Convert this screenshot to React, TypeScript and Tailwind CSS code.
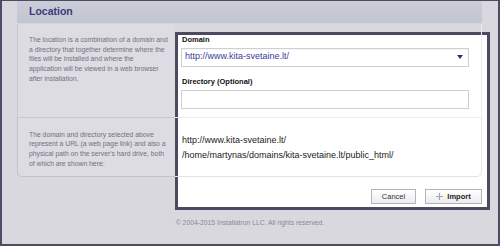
import React from "react";

const leftText1 = [
  "The location is a combination of a domain and",
  "a directory that together determine where the",
  "files will be installed and where the",
  "application will be viewed in a web browser",
  "after installation.",
];

const leftText2 = [
  "The domain and directory selected above",
  "represent a URL (a web page link) and also a",
  "physical path on the server's hard drive, both",
  "of which are shown here:",
];

function Lines({ lines }: { lines: string[] }) {
  return (
    <div className="text-[6.8px] leading-[9.7px] text-[#72717f] whitespace-nowrap">
      {lines.map((l) => (
        <div key={l}>{l}</div>
      ))}
    </div>
  );
}

export default function App() {
  return (
    <div className="relative w-[500px] h-[246px] overflow-hidden bg-[#d9d8de] border-x-2 border-b-2 border-t border-[#4d4c63] font-['Liberation_Sans',Arial,sans-serif]">
      {/* highlight frame */}
      <div className="absolute left-[173px] top-[31px] w-[315px] h-[178px] border-[3px] border-[#4b4a61] bg-white" />

      <div className="relative z-10 ml-[15px] w-[465px]">
        <div className="h-[23px] flex items-center pl-[12px] bg-gradient-to-b from-[#cbcdd8] to-[#c2c5d1] border-b border-[#d3d5de]">
          <span className="text-[10.5px] font-bold text-[#3b3a78]">Location</span>
        </div>

        <div className="flex h-[94px]">
          <div className="w-[158px] bg-[#dddce2] border-l border-b border-[#c8c7d0] pl-[11px] pt-[11px]">
            <Lines lines={leftText1} />
          </div>
          <div className="flex-1 border-b border-r border-[#ededf1] pl-[6px] pr-[12px] pt-[11px]">
            <div className="text-[7.5px] leading-[9px] font-bold text-[#111] pl-[1px]">Domain</div>
            <div className="mt-[3.5px] h-[19px] flex items-center justify-between border border-[#cfcfd6] bg-white pl-[3px] pr-[5px] shadow-[inset_0_1px_1px_rgba(0,0,0,0.04)]">
              <span className="text-[9px] text-[#3b3a9e]">http://www.kita-svetaine.lt/</span>
              <svg width="6" height="4" viewBox="0 0 6 4">
                <path d="M0 0h6L3 4z" fill="#2f2e7c" />
              </svg>
            </div>
            <div className="mt-[10.5px] text-[7.5px] leading-[9px] font-bold text-[#111] pl-[1px]">Directory (Optional)</div>
            <div className="mt-[3.5px] h-[19px] border border-[#cfcfd6] bg-white" />
          </div>
        </div>

        <div className="flex h-[59px]">
          <div className="w-[158px] bg-[#dddce2] border-l border-b border-[#c2c1cb] rounded-bl-[5px] pl-[11px] pt-[11.5px]">
            <Lines lines={leftText2} />
          </div>
          <div className="flex-1 border-b border-r border-[#e3e3e8] rounded-br-[5px] pl-[7px] pt-[15px] text-[9px] leading-[15px] text-[#222]">
            <div>http://www.kita-svetaine.lt/</div>
            <div>/home/martynas/domains/kita-svetaine.lt/public_html/</div>
          </div>
        </div>

        <div className="mt-[12px] flex justify-end gap-[9px]">
          <button className="w-[45px] h-[15px] border border-[#b3b3bb] bg-gradient-to-b from-white to-[#ececef] text-[7.5px] text-[#333] flex items-center justify-center">
            Cancel
          </button>
          <button className="w-[57px] h-[15px] border border-[#b3b3bb] bg-gradient-to-b from-white to-[#ececef] text-[7.5px] font-bold text-[#222] flex items-center justify-center gap-[4px]">
            <svg width="7" height="7" viewBox="0 0 7 7">
              <path d="M3.5 0v7M0 3.5h7" stroke="#a5a5ad" strokeWidth="1.2" />
            </svg>
            Import
          </button>
        </div>
      </div>

      <div className="mt-[14px] text-center text-[6.8px] leading-[10px] text-[#8a8994]">
        © 2004-2015 Installatron LLC. All rights reserved.
      </div>
    </div>
  );
}
